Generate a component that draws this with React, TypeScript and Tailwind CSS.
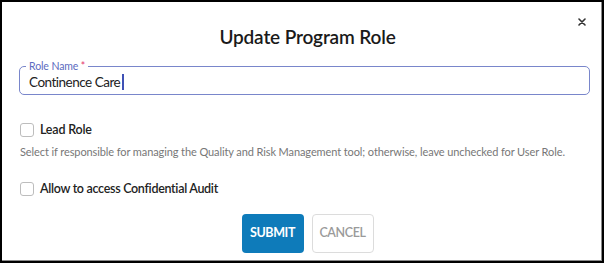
import React from "react";

export default function App() {
  return (
    <div
      className="relative w-[604px] h-[263px] bg-white border-2 border-black shadow-[inset_-1px_-1px_0_#8a8a8a] text-[#222]"
      style={{ fontFamily: "Lato, 'Noto Sans', sans-serif" }}
    >
      <button className="absolute left-[574px] top-[14px] w-[12px] h-[12px] flex items-center justify-center">
        <svg width="8" height="8" viewBox="0 0 8 8">
          <path d="M1 1 L7 7 M7 1 L1 7" stroke="#333" strokeWidth="1.6" strokeLinecap="round" />
        </svg>
      </button>

      <div className="pt-[21px] flex flex-col pl-[17px] pr-[12px]">
        <h1 className="text-center pl-[6px] text-[19px] leading-[28px] font-semibold tracking-[-0.15px] text-[#1a1a1a]">
          Update Program Role
        </h1>

        <div className="relative mt-[15px] h-[29px] border border-[#7986cb] rounded-[5px] flex items-center pl-[9px]">
          <span className="absolute -top-[8px] left-[6px] px-[3px] bg-white text-[10.5px] leading-[14px] tracking-[-0.1px] text-[#5c6bc0]">
            Role Name <span className="text-[#e53970]">*</span>
          </span>
          <span className="text-[13.5px] leading-[18px] tracking-[-0.5px] text-[#222] pt-[2px]">Continence Care</span>
          <span className="w-[1.5px] h-[16px] bg-[#3f51b5] ml-[2px] mt-[2px]" />
        </div>

        <label className="mt-[27px] flex items-center gap-[6px] h-[16px] pl-[1px]">
          <span className="w-[14px] h-[14px] rounded-[3px] border border-[#bdbdbd] bg-white" />
          <span className="text-[12.5px] font-semibold tracking-[-0.2px] text-[#222]">Lead Role</span>
        </label>
        <p className="mt-[6px] pl-[1px] whitespace-nowrap text-[11px] leading-[16px] tracking-[-0.1px] text-[#777]">
          Select if responsible for managing the Quality and Risk Management tool; otherwise, leave unchecked for User Role.
        </p>

        <label className="mt-[21px] flex items-center gap-[6px] h-[16px] pl-[1px]">
          <span className="w-[14px] h-[14px] rounded-[3px] border border-[#bdbdbd] bg-white" />
          <span className="text-[12.5px] font-semibold tracking-[-0.3px] text-[#222]">Allow to access Confidential Audit</span>
        </label>

        <div className="mt-[17px] flex justify-center gap-[8px] pl-[6px]">
          <button className="w-[62px] h-[39px] rounded-[4px] bg-[#0e7bba] text-white text-[12.5px] font-bold tracking-[-0.4px]">
            SUBMIT
          </button>
          <button className="w-[62px] h-[39px] rounded-[4px] border border-[#dcdcdc] bg-white text-[#9a9a9a] text-[12.5px] font-semibold tracking-[-0.4px]">
            CANCEL
          </button>
        </div>
      </div>
    </div>
  );
}
